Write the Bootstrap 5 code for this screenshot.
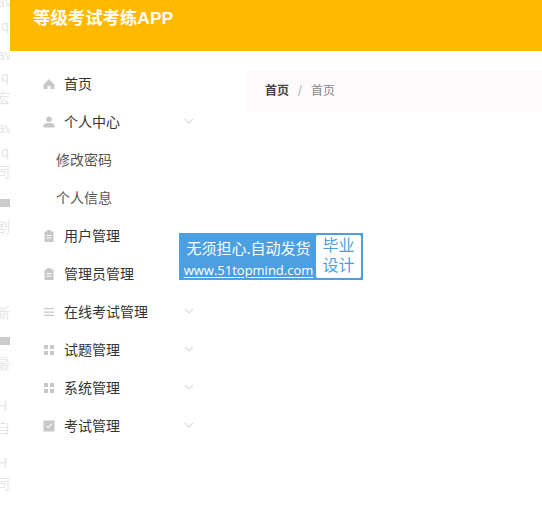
<!DOCTYPE html>
<html lang="zh-CN">
<head>
    <meta charset="UTF-8">
    <meta name="viewport" content="width=device-width, initial-scale=1.0">
    <title>等级考试考练APP</title>
    <link href="https://cdn.jsdelivr.net/npm/bootstrap@5.3.0/dist/css/bootstrap.min.css" rel="stylesheet">
    <style>
        html, body {
            height: 513px;
            overflow: hidden;
        }
        body {
            background: #fff;
            font-family: "Liberation Sans", "Noto Sans CJK SC", sans-serif;
            color: #333;
        }
        .page-wrap {
            height: 513px;
        }
        .left-strip {
            width: 10px;
            height: 513px;
            flex: none;
            font-size: 14px;
            fill: #e6e6e6;
        }
        .left-strip rect {
            fill: #cbcbcb;
        }
        .top-bar {
            height: 51px;
            background: #ffb900;
            padding-left: 23px;
        }
        .app-title {
            font-size: 17.4px;
            font-weight: 700;
            color: #fff;
            line-height: 36px;
        }
        .side-menu {
            width: 236px;
            padding: 14px 0 0 33px;
        }
        .menu-row {
            height: 38px;
            width: 151px;
            font-size: 14px;
            color: #333;
        }
        .menu-row svg.ico {
            width: 12px;
            height: 12px;
            margin-right: 9px;
            fill: #c8c8c8;
            flex: none;
        }
        .menu-row svg.arrow {
            width: 10px;
            height: 6px;
            margin-left: auto;
            margin-top: -2px;
            fill: none;
            stroke: #dcdcdc;
            stroke-width: 1.2;
        }
        .sub-row {
            padding-left: 13px;
            color: #555;
        }
        .crumb-box {
            margin-top: 19px;
            height: 42px;
            background: #fcfafa;
            border-radius: 4px 0 0 4px;
            padding-left: 19px;
            font-size: 12px;
        }
        .crumb-box b {
            color: #444;
        }
        .crumb-sep {
            color: #bbb;
            font-size: 14px;
            margin: 0 9px;
        }
        .crumb-now {
            color: #888;
        }
        .promo {
            position: absolute;
            left: 179px;
            top: 233px;
            width: 184px;
            height: 47px;
            background: #4c9fe0;
            color: #fff;
            padding: 2px;
        }
        .promo-left {
            width: 135px;
            text-align: center;
            line-height: 1;
        }
        .promo-top {
            font-size: 15px;
            margin-top: 5px;
            font-family: "Noto Sans CJK SC", sans-serif;
        }
        .promo-url {
            font-family: "Open Sans", sans-serif;
            font-size: 13px;
            margin-top: 9px;
            text-decoration: underline;
            text-underline-offset: 2px;
            white-space: nowrap;
        }
        .promo-right {
            flex: 1;
            background: #fff;
            color: #4c9fe0;
            font-size: 16px;
            line-height: 20px;
            text-align: center;
            border-radius: 2px;
            padding-top: 1px;
        }
    </style>
</head>
<body>
    <div class="page-wrap d-flex position-relative">
        <svg class="left-strip" viewBox="0 0 10 513">
            <text x="-3" y="7">av</text>
            <text x="1" y="31">q</text>
            <text x="-3" y="60">av</text>
            <text x="1" y="82">q</text>
            <text x="-4" y="103">宏</text>
            <text x="-3" y="133">av</text>
            <text x="1" y="157">q</text>
            <text x="-4" y="177">司</text>
            <rect x="0" y="199" width="10" height="8"></rect>
            <text x="-4" y="232">剧</text>
            <text x="-4" y="318">新</text>
            <rect x="0" y="337" width="10" height="8"></rect>
            <text x="-4" y="369">最</text>
            <text x="-3" y="411">H</text>
            <text x="-4" y="433">自</text>
            <text x="-3" y="468">H</text>
            <text x="-4" y="489">司</text>
        </svg>
        <div class="flex-grow-1">
            <div class="top-bar">
                <div class="app-title">等级考试考练APP</div>
            </div>
            <div class="d-flex">
                <div class="side-menu">
                    <div class="menu-row d-flex align-items-center">
                        <svg class="ico" viewBox="0 0 12 12"><path d="M6 1 11.500 6.500V11H7.500V8h-3v3H.5V6.500z"/></svg>首页
                    </div>
                    <div class="menu-row d-flex align-items-center">
                        <svg class="ico" viewBox="0 0 12 12"><circle cx="6" cy="3.300" r="2.800"/><path d="M.5 11.500V9.500C.5 7.600 3 7 6 7s5.500.6 5.500 2.500v2z"/></svg>个人中心
                        <svg class="arrow" viewBox="0 0 10 6"><path d="M1 1l4 4 4-4"/></svg>
                    </div>
                    <div class="menu-row sub-row d-flex align-items-center">修改密码</div>
                    <div class="menu-row sub-row d-flex align-items-center">个人信息</div>
                    <div class="menu-row d-flex align-items-center">
                        <svg class="ico" viewBox="0 0 12 12"><path fill-rule="evenodd" d="M4 0h4v1.500h2.500V12h-9V1.500H4zM3.500 5v1h5V5zm0 2.500v1h5v-1z"/></svg>用户管理
                    </div>
                    <div class="menu-row d-flex align-items-center">
                        <svg class="ico" viewBox="0 0 12 12"><path fill-rule="evenodd" d="M4 0h4v1.500h2.500V12h-9V1.500H4zM3.500 5v1h5V5zm0 2.500v1h5v-1z"/></svg>管理员管理
                    </div>
                    <div class="menu-row d-flex align-items-center">
                        <svg class="ico" viewBox="0 0 12 12"><path d="M1 2h10v1.300H1zM1 5.400h10v1.300H1zM1 8.800h10v1.300H1z"/></svg>在线考试管理
                        <svg class="arrow" viewBox="0 0 10 6"><path d="M1 1l4 4 4-4"/></svg>
                    </div>
                    <div class="menu-row d-flex align-items-center">
                        <svg class="ico" viewBox="0 0 12 12"><path d="M1 1h4v4H1zM7 1h4v4H7zM1 7h4v4H1zM7 7h4v4H7z"/></svg>试题管理
                        <svg class="arrow" viewBox="0 0 10 6"><path d="M1 1l4 4 4-4"/></svg>
                    </div>
                    <div class="menu-row d-flex align-items-center">
                        <svg class="ico" viewBox="0 0 12 12"><path d="M1 1h4v4H1zM7 1h4v4H7zM1 7h4v4H1zM7 7h4v4H7z"/></svg>系统管理
                        <svg class="arrow" viewBox="0 0 10 6"><path d="M1 1l4 4 4-4"/></svg>
                    </div>
                    <div class="menu-row d-flex align-items-center">
                        <svg class="ico" viewBox="0 0 12 12"><path fill-rule="evenodd" d="M.5.500h11v11H.5zM3 6.500 5 8.300 9.200 4.200 8.500 3.600 5 7 3.700 5.800z"/></svg>考试管理
                        <svg class="arrow" viewBox="0 0 10 6"><path d="M1 1l4 4 4-4"/></svg>
                    </div>
                </div>
                <div class="flex-grow-1">
                    <div class="crumb-box d-flex align-items-center">
                        <b>首页</b><span class="crumb-sep">/</span><span class="crumb-now">首页</span>
                    </div>
                </div>
            </div>
        </div>
        <div class="promo d-flex">
            <div class="promo-left">
                <div class="promo-top">无须担心.自动发货</div>
                <div class="promo-url">www.51topmind.com</div>
            </div>
            <div class="promo-right">毕业<br>设计</div>
        </div>
    </div>
</body>
</html>
